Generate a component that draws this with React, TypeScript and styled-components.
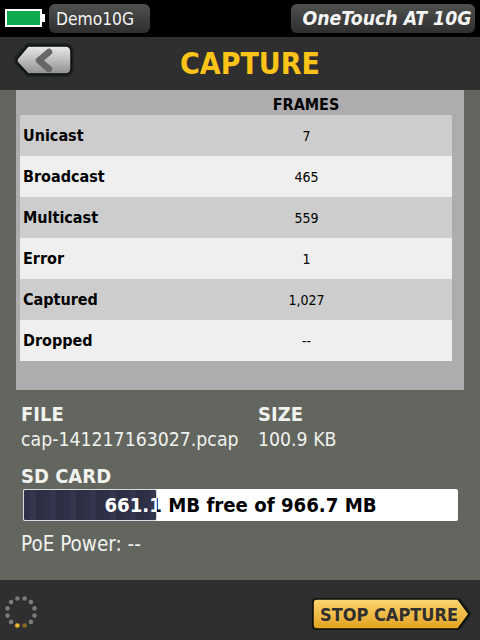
import React from "react";
import styled, { createGlobalStyle } from "styled-components";

const Global = createGlobalStyle`
  html, body { margin: 0; padding: 0; background: #000; }
  * { box-sizing: border-box; }
`;
const Screen = styled.div`
  width: 480px; height: 640px; display: flex; flex-direction: column; overflow: hidden;
  font-family: "DejaVu Sans Condensed", "DejaVu Sans", sans-serif; background: #63655f;
`;
const StatusBar = styled.div`
  height: 37px; background: #000; display: flex; align-items: flex-start; padding: 4px 5px 0 5px;
`;
const Battery = styled.div`
  width: 37px; height: 18px; margin-top: 5px; border: 2px solid #fff; background: #0ea84f; position: relative;
  &::after { content: ""; position: absolute; right: -5px; top: 3px; width: 3px; height: 8px; background: #fff; }
`;
const Pill = styled.div<{ $wide?: boolean }>`
  height: 29px; border-radius: 6px; background: linear-gradient(#505250, #3c3d3c 55%, #2e2f2e);
  color: #f4f4f4; display: flex; align-items: center;
  ${p => p.$wide
    ? `margin-left: auto; width: 184px; justify-content: center; padding-left: 8px; font-style: italic; font-weight: 700; font-size: 19.3px;`
    : `margin-left: 7px; width: 101px; padding-left: 7px; font-size: 17.3px;`}
`;
const TitleBar = styled.div`
  height: 53px; background: #2f2f2f; display: flex; align-items: center; position: relative; justify-content: center; padding-left: 20px;
`;
const BackButton = styled.svg`
  position: absolute; left: 13px; top: 6px;
`;
const Title = styled.h1`
  margin: 0 0 1px; color: #fcc318; font-size: 30px; font-weight: 700; font-family: "DejaVu Sans Condensed", "DejaVu Sans", sans-serif;
`;
const Body = styled.div`
  flex: 1; display: flex; flex-direction: column; padding: 0 16px;
`;
const Panel = styled.div`
  height: 300px; background: #aeacae; padding: 0 12px 0 4px;
`;
const Header = styled.div`
  height: 25px; display: grid; grid-template-columns: 232px 108px; align-items: end;
  font-weight: 700; font-size: 16px; color: #000;
  span { grid-column: 2; text-align: center; line-height: 21px; }
`;
const Row = styled.div<{ $alt: boolean }>`
  height: 41px; display: grid; grid-template-columns: 232px 108px; align-items: center;
  background: ${p => (p.$alt ? "#efefef" : "#cdcdcd")}; color: #000;
`;
const Label = styled.div`
  padding: 3px 0 0 3px; font-weight: 700; font-size: 16px; line-height: 20px; margin-bottom: 2px;
`;
const Value = styled.div`
  text-align: center; font-size: 14px; margin-left: 1px; padding-top: 1px;
`;
const InfoGrid = styled.div`
  display: grid; grid-template-columns: 237px 1fr; padding: 12px 0 0 5px; color: #f0f2ee;
`;
const Heading = styled.div`
  font-weight: 700; font-size: 20px; line-height: 24px;
`;
const Text = styled.div`
  font-size: 19.3px; line-height: 24px; white-space: nowrap; padding-top: 2px;
`;
const SdSection = styled.div`
  padding: 12px 0 0 5px; color: #f0f2ee;
`;
const Bar = styled.div`
  position: relative; width: 435px; height: 32px; background: #fff; border-radius: 2px; margin: 1px 0 0 2px;
  display: flex; align-items: center; justify-content: center;
  font-weight: 700; font-size: 20.2px; color: #000; white-space: nowrap;
`;
const BarFill = styled.div`
  position: absolute; left: 0; top: 0; bottom: 0; overflow: hidden; border: 1px solid #d8d8e0; border-radius: 2px;
  background: repeating-linear-gradient(90deg, #2e3048 0 6px, #34364e 6px 12px, #2c2e44 12px 20px);
  color: #fff;
`;
const BarFillText = styled.div`
  position: absolute; left: -1px; top: -1px; width: 435px; height: 32px; display: flex; align-items: center; justify-content: center;
`;
const Poe = styled.div`
  font-size: 20.5px; line-height: 24px; margin-top: 11px;
`;
const Footer = styled.div`
  height: 60px; background: #2f2f2f; position: relative; display: flex; align-items: center; justify-content: flex-end; padding: 0 9px 0 0;
`;
const Spinner = styled.svg`
  position: absolute; left: 5px; top: 16px;
`;
const StopWrap = styled.div`
  position: relative; width: 159px; height: 32px; margin-top: 8px; display: flex; align-items: center; padding-left: 8px;
  font-weight: 700; font-size: 18px; color: #2f2f2f; white-space: nowrap;
  span { position: relative; }
`;
const StopShape = styled.svg`
  position: absolute; left: 0; top: 0;
`;

const rows = [
  ["Unicast", "7"], ["Broadcast", "465"], ["Multicast", "559"],
  ["Error", "1"], ["Captured", "1,027"], ["Dropped", "--"],
];
const dots = Array.from({ length: 12 }, (_, i) => {
  const a = ((i + 0.5) * 30 * Math.PI) / 180;
  return { x: 16 + 14 * Math.sin(a), y: 16 - 14 * Math.cos(a), i };
});
const barText = "661.1 MB free of 966.7 MB";
const backPath = "M15 3H53a5 5 0 0 1 5 5V26a5 5 0 0 1-5 5H15L4 19V16Z";
const stopPath = "M5 1H146L157 16L146 31H5a4 4 0 0 1-4-4V5a4 4 0 0 1 4-4Z";

export default function App() {
  return (
    <Screen>
      <Global />
      <StatusBar>
        <Battery />
        <Pill>Demo10G</Pill>
        <Pill $wide>OneTouch AT 10G</Pill>
      </StatusBar>
      <TitleBar>
        <BackButton width="62" height="40" viewBox="0 0 62 40">
          <defs>
            <linearGradient id="bk" x1="0" y1="0" x2="0" y2="1">
              <stop offset="0" stopColor="#ebebe9" />
              <stop offset="1" stopColor="#8f908d" />
            </linearGradient>
          </defs>
          <path d={backPath} fill="none" stroke="#1e241e" strokeWidth="6" strokeLinejoin="round" />
          <path d={backPath} fill="url(#bk)" stroke="#0c0f0c" strokeWidth="1.5" strokeLinejoin="round" />
          <path d="M36 9L26 17.5L36 26" fill="none" stroke="#666" strokeWidth="6.5" strokeLinecap="round" strokeLinejoin="round" />
        </BackButton>
        <Title>CAPTURE</Title>
      </TitleBar>
      <Body>
        <Panel>
          <Header><span>FRAMES</span></Header>
          {rows.map(([l, v], i) => (
            <Row key={l} $alt={i % 2 === 1}>
              <Label>{l}</Label>
              <Value>{v}</Value>
            </Row>
          ))}
        </Panel>
        <InfoGrid>
          <Heading>FILE</Heading>
          <Heading>SIZE</Heading>
          <Text>cap-141217163027.pcap</Text>
          <Text>100.9 KB</Text>
        </InfoGrid>
        <SdSection>
          <Heading>SD CARD</Heading>
          <Bar>
            {barText}
            <BarFill style={{ width: "134px" }}>
              <BarFillText>{barText}</BarFillText>
            </BarFill>
          </Bar>
          <Poe>PoE Power: --</Poe>
        </SdSection>
      </Body>
      <Footer>
        <Spinner width="32" height="32" viewBox="0 0 32 32">
          {dots.map(d => (
            <circle key={d.i} cx={d.x} cy={d.y} r="2.3"
              fill={d.i === 6 ? "#f0b62c" : d.i === 5 ? "#8a6a20" : "#7b7b7b"} />
          ))}
        </Spinner>
        <StopWrap>
          <StopShape width="159" height="32" viewBox="0 0 159 32">
            <defs>
              <linearGradient id="st" x1="0" y1="0" x2="0" y2="1">
                <stop offset="0" stopColor="#fbd672" />
                <stop offset="1" stopColor="#e3a11f" />
              </linearGradient>
            </defs>
            <path d={stopPath} fill="none" stroke="#1e241e" strokeWidth="5" strokeLinejoin="round" />
            <path d={stopPath} fill="url(#st)" stroke="#0b0d0b" strokeWidth="1.5" strokeLinejoin="round" />
          </StopShape>
          <span>STOP CAPTURE</span>
        </StopWrap>
      </Footer>
    </Screen>
  );
}
